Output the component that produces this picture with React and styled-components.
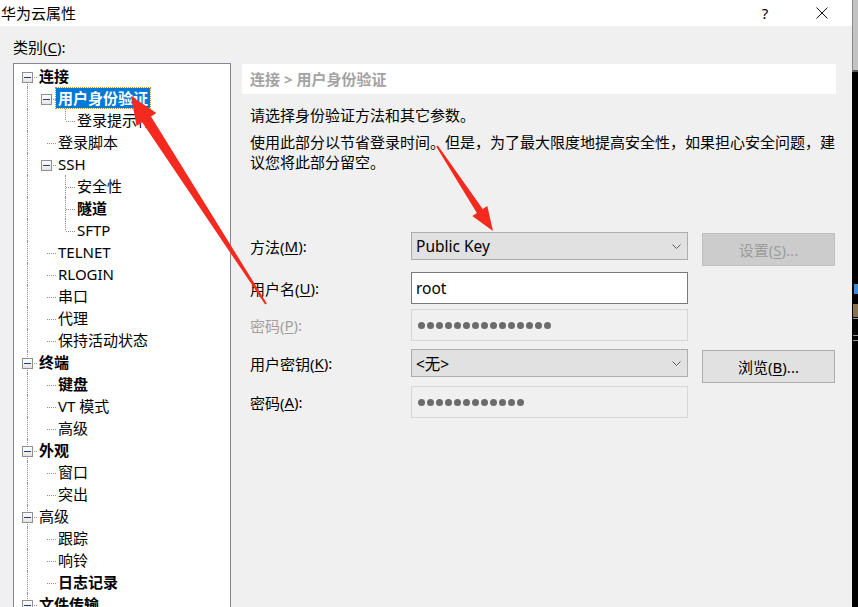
import React from "react";
import styled, { createGlobalStyle } from "styled-components";

const FONT = `"Noto Sans", "Noto Sans CJK SC", sans-serif`;

const GlobalStyle = createGlobalStyle`
  html, body { margin: 0; padding: 0; background: #f0f0f0; }
  * { box-sizing: border-box; }
`;

const Screen = styled.div`
  position: relative;
  width: 858px;
  height: 607px;
  overflow: hidden;
  display: flex;
  font-family: ${FONT};
  font-size: 15px;
  color: #000;
`;

const Dialog = styled.div`
  width: 852px;
  display: flex;
  flex-direction: column;
  background: #f0f0f0;
`;

const TitleBar = styled.div`
  height: 26px;
  flex-shrink: 0;
  background: #fff;
  display: flex;
  align-items: center;
  padding-right: 24px;
  line-height: 20px;
`;

const Title = styled.span`
  flex: 1;
  padding-left: 1px;
`;

const HelpBtn = styled.span`
  width: 20px;
  text-align: center;
  margin-right: 41px;
`;

const CloseBtn = styled.svg`
  width: 12px;
  height: 12px;
`;

const Body = styled.div`
  flex: 1;
  display: flex;
`;

const LeftCol = styled.div`
  width: 231px;
  padding-left: 13px;
  display: flex;
  flex-direction: column;
`;

const CatLabel = styled.div`
  height: 37px;
  padding-top: 11px;
  line-height: 20px;
`;

const TreeBox = styled.div`
  height: 580px;
  flex-shrink: 0;
  background: #fff;
  border: 1px solid #828790;
  padding: 1px 0 0 4px;
  overflow: hidden;
`;

const Row = styled.div`
  height: 22px;
  display: flex;
  align-items: center;
`;

const Cell = styled.div`
  position: relative;
  width: 19px;
  height: 22px;
  flex-shrink: 0;
  display: flex;
  align-items: center;
  padding-left: 4px;

  &::before {
    content: "";
    display: ${(p) => (p.$v ? "block" : "none")};
    position: absolute;
    left: 9px;
    top: ${(p) => (p.$v === "bottom" ? "11px" : "0")};
    bottom: ${(p) => (p.$v === "top" ? "11px" : "0")};
    border-left: 1px dotted #8f8f8f;
  }

  &::after {
    content: "";
    display: ${(p) => (p.$h ? "block" : "none")};
    position: absolute;
    left: 10px;
    right: 0;
    top: 12px;
    border-top: 1px dotted #8f8f8f;
  }
`;

const Box = styled.span`
  position: relative;
  z-index: 1;
  width: 11px;
  height: 11px;
  margin-top: 3px;
  border: 1px solid #8f8f8f;
  background: linear-gradient(#ffffff, #e4e4e4);
  display: flex;
  align-items: center;
  justify-content: center;

  &::after {
    content: "";
    width: 7px;
    height: 1px;
    background: #213d86;
  }
`;

const ItemText = styled.span`
  padding: 0 2px;
  height: 20px;
  line-height: 20px;
  white-space: nowrap;
  font-weight: ${(p) => (p.$bold ? 700 : 400)};
  background: ${(p) => (p.$selected ? "#0078d7" : "transparent")};
  color: ${(p) => (p.$selected ? "#fff" : "#000")};
  outline: ${(p) => (p.$selected ? "1px dotted #c88a2c" : "none")};
`;

const RightCol = styled.div`
  margin-left: 11px;
  width: 594px;
  padding-top: 38px;
`;

const Crumb = styled.div`
  height: 30px;
  background: #fff;
  padding-left: 8px;
  line-height: 30px;
  color: #a3a3a3;
  font-weight: 700;
`;

const Para = styled.div`
  padding-left: 8px;
  margin-top: ${(p) => p.$mt}px;
  line-height: 20px;
  white-space: nowrap;
`;

const FormRow = styled.div`
  display: flex;
  align-items: flex-start;
  padding-left: 8px;
  margin-top: ${(p) => p.$mt}px;
`;

const FieldLabel = styled.div`
  width: 161px;
  height: ${(p) => p.$h}px;
  display: flex;
  align-items: center;
  color: ${(p) => (p.$disabled ? "#a0a0a0" : "#000")};
`;

const Key = styled.u`
  text-underline-offset: 2px;
`;

const Select = styled.div`
  width: 277px;
  height: ${(p) => p.$h}px;
  background: #e1e1e1;
  border: 1px solid #adadad;
  display: flex;
  align-items: center;
  justify-content: space-between;
  padding: 0 6px 0 4px;
  font-size: 15.5px;
`;

const TextInput = styled.div`
  width: 277px;
  height: 32px;
  background: ${(p) => (p.$disabled ? "#f0f0f0" : "#fff")};
  border: 1px solid ${(p) => (p.$disabled ? "#d7d7d7" : "#7a7a7a")};
  display: flex;
  align-items: center;
  padding-left: ${(p) => (p.$disabled ? 6 : 4)}px;
  gap: 2px;
  font-size: 15.5px;
`;

const Dot = styled.span`
  width: 7px;
  height: 7px;
  border-radius: 50%;
  background: #6b6b6b;
`;

const Button = styled.div`
  width: 133px;
  height: 33px;
  margin: 1px 0 0 14px;
  background: ${(p) => (p.$disabled ? "#cccccc" : "#e1e1e1")};
  border: 1px solid ${(p) => (p.$disabled ? "#bfbfbf" : "#adadad")};
  color: ${(p) => (p.$disabled ? "#9d9d9d" : "#000")};
  display: flex;
  align-items: center;
  justify-content: center;
`;

const Strip = styled.div`
  width: 6px;
  display: flex;
  flex-direction: column;
  background: #000;
`;

const StripTop = styled.div`
  height: 72px;
  background: #c3c3c3;
  border-left: 1px solid #8a8a8a;
  border-bottom: 2px solid #5a5a5a;
`;

const Frag = styled.div`
  height: ${(p) => p.$h}px;
  margin-top: ${(p) => p.$mt}px;
  margin-left: ${(p) => p.$ml || 1}px;
  background: ${(p) => p.$c};
`;

const Overlay = styled.svg`
  position: absolute;
  left: 0;
  top: 0;
  pointer-events: none;
`;

const tree = [
  { t: "连接", l: 0, box: true, bold: true, first: true },
  { t: "用户身份验证", l: 1, box: true, bold: true, sel: true },
  { t: "登录提示符", l: 2, last: true },
  { t: "登录脚本", l: 1 },
  { t: "SSH", l: 1, box: true },
  { t: "安全性", l: 2 },
  { t: "隧道", l: 2, bold: true },
  { t: "SFTP", l: 2, last: true },
  { t: "TELNET", l: 1 },
  { t: "RLOGIN", l: 1 },
  { t: "串口", l: 1 },
  { t: "代理", l: 1 },
  { t: "保持活动状态", l: 1 },
  { t: "终端", l: 0, box: true, bold: true },
  { t: "键盘", l: 1, bold: true },
  { t: "VT 模式", l: 1 },
  { t: "高级", l: 1 },
  { t: "外观", l: 0, box: true, bold: true },
  { t: "窗口", l: 1 },
  { t: "突出", l: 1 },
  { t: "高级", l: 0, box: true },
  { t: "跟踪", l: 1 },
  { t: "响铃", l: 1 },
  { t: "日志记录", l: 1, bold: true },
  { t: "文件传输", l: 0, box: true, bold: true },
];

function TreeItem({ item }) {
  return (
    <Row>
      <Cell $v={item.first ? "bottom" : "full"} $h={item.l === 0}>
        {item.l === 0 && <Box />}
      </Cell>
      {item.l >= 1 && <Cell $h={item.l === 1}>{item.l === 1 && item.box && <Box />}</Cell>}
      {item.l === 2 && <Cell $v={item.last ? "top" : "full"} $h />}
      <ItemText $bold={item.bold} $selected={item.sel}>
        {item.t}
      </ItemText>
    </Row>
  );
}

const Chevron = () => (
  <svg width="9" height="5" viewBox="0 0 9 5">
    <polyline points="0.5,0.5 4.5,4.5 8.5,0.5" fill="none" stroke="#5f5f5f" strokeWidth="1" />
  </svg>
);

const Dots = ({ n }) => Array.from({ length: n }, (_, i) => <Dot key={i} />);

export default function App() {
  return (
    <>
      <GlobalStyle />
      <Screen>
        <Dialog>
          <TitleBar>
            <Title>华为云属性</Title>
            <HelpBtn>?</HelpBtn>
            <CloseBtn viewBox="0 0 12 12">
              <path d="M0.5 0.5 L11.5 11.5 M11.5 0.5 L0.5 11.5" stroke="#111" strokeWidth="1" />
            </CloseBtn>
          </TitleBar>
          <Body>
            <LeftCol>
              <CatLabel>
                类别(<Key>C</Key>):
              </CatLabel>
              <TreeBox>
                {tree.map((it, i) => (
                  <TreeItem key={i} item={it} />
                ))}
              </TreeBox>
            </LeftCol>
            <RightCol>
              <Crumb>连接 &gt; 用户身份验证</Crumb>
              <Para $mt={11}>请选择身份验证方法和其它参数。</Para>
              <Para $mt={7}>
                使用此部分以节省登录时间。但是，为了最大限度地提高安全性，如果担心安全问题，建
                <br />
                议您将此部分留空。
              </Para>

              <FormRow $mt={60}>
                <FieldLabel $h={28}>
                  方法(<Key>M</Key>):
                </FieldLabel>
                <Select $h={28}>
                  <span>Public Key</span>
                  <Chevron />
                </Select>
                <Button $disabled>
                  设置(<Key>S</Key>)...
                </Button>
              </FormRow>

              <FormRow $mt={6}>
                <FieldLabel $h={32}>
                  用户名(<Key>U</Key>):
                </FieldLabel>
                <TextInput>root</TextInput>
              </FormRow>

              <FormRow $mt={5}>
                <FieldLabel $h={32} $disabled>
                  密码(<Key>P</Key>):
                </FieldLabel>
                <TextInput $disabled>
                  <Dots n={15} />
                </TextInput>
              </FormRow>

              <FormRow $mt={8}>
                <FieldLabel $h={28}>
                  用户密钥(<Key>K</Key>):
                </FieldLabel>
                <Select $h={28}>
                  <span>&lt;无&gt;</span>
                  <Chevron />
                </Select>
                <Button>
                  浏览(<Key>B</Key>)...
                </Button>
              </FormRow>

              <FormRow $mt={3}>
                <FieldLabel $h={32}>
                  密码(<Key>A</Key>):
                </FieldLabel>
                <TextInput $disabled>
                  <Dots n={12} />
                </TextInput>
              </FormRow>
            </RightCol>
          </Body>
        </Dialog>

        <Strip>
          <StripTop />
          <Frag $mt={212} $h={10} $c="#3b8fd6" $ml={2} />
          <Frag $mt={10} $h={13} $c="#8a7350" />
          <Frag $mt={1} $h={1} $c="#9a9a9a" />
          <Frag $mt={16} $h={1} $c="#9a9a9a" />
          <Frag $mt={4} $h={1} $c="#9a9a9a" />
        </Strip>

        <Overlay width="858" height="607" viewBox="0 0 858 607">
          <polygon
            points="131,96 156.3,113 151,116.6 266.8,303.5 265.2,304.5 142.2,122.2 136.5,126"
            fill="#f5291d"
          />
          <polygon
            points="493,231 487.3,206 482.7,209.1 437.8,145.4 436.2,146.6 476.9,212.9 472.3,216"
            fill="#f5291d"
          />
        </Overlay>
      </Screen>
    </>
  );
}
